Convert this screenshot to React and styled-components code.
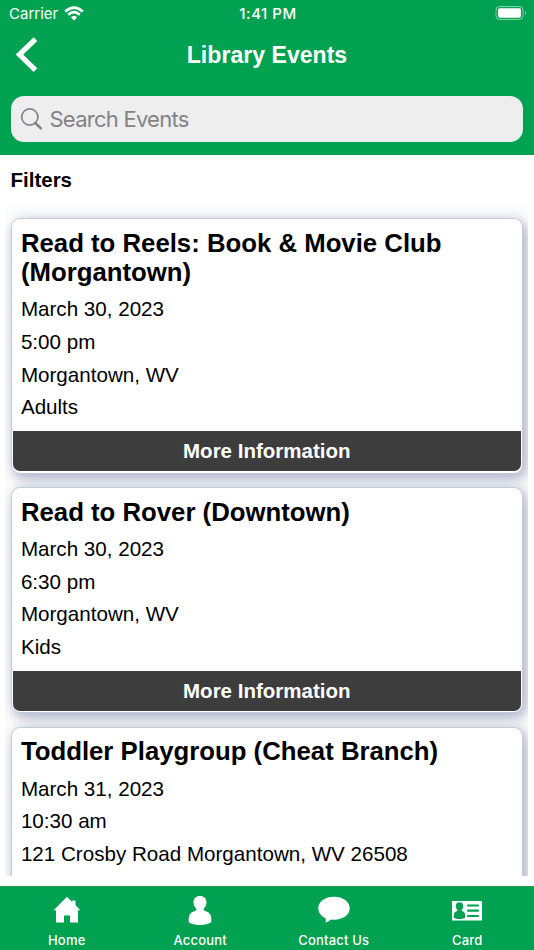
import React from "react";
import styled, { createGlobalStyle } from "styled-components";

const GREEN = "#00a150";

const GlobalStyle = createGlobalStyle`
  * { box-sizing: border-box; }
  body { margin: 0; background: #fff; color: #000; font-family: "Liberation Sans", Arial, sans-serif; }
  h1, h2, p { margin: 0; }
`;

const Screen = styled.div`
  width: 534px;
  height: 950px;
  display: flex;
  flex-direction: column;
  overflow: hidden;
`;

const Header = styled.header`
  height: 155px;
  flex: none;
  background: ${GREEN};
  color: #fff;
`;

const StatusBar = styled.div`
  height: 28px;
  display: grid;
  grid-template-columns: 1fr auto 1fr;
  align-items: center;
  padding: 0 7px 0 9px;
  font-family: Inter, sans-serif;
  font-size: 15px;
  line-height: 28px;
`;

const Carrier = styled.div`
  display: flex;
  align-items: center;
  gap: 6px;
  svg { margin-top: -2px; }
`;

const Clock = styled.div`
  font-weight: 500;
  font-size: 15px;
  letter-spacing: 0.5px;
`;

const Battery = styled.div`
  display: flex;
  justify-content: flex-end;
  svg { display: block; margin-top: -2px; }
`;

const TitleBar = styled.div`
  height: 68px;
  display: grid;
  grid-template-columns: 60px 1fr 60px;
  align-items: start;
`;

const BackButton = styled.button`
  height: 54px;
  padding: 0 0 0 15px;
  border: 0;
  background: none;
  color: #fff;
  svg { display: block; }
`;

const Title = styled.h1`
  text-align: center;
  font-size: 23.1px;
  line-height: 54px;
`;

const SearchBox = styled.div`
  height: 46px;
  margin: 0 11px 0 10.5px;
  padding-left: 9px;
  display: flex;
  align-items: center;
  gap: 7px;
  border-radius: 13px;
  background: #eeeeef;
  color: #838388;
  font-family: Inter, sans-serif;
  font-size: 22px;
`;

const SearchLabel = styled.span`
  letter-spacing: -0.75px;
  line-height: 46px;
`;

const Content = styled.main`
  height: 721px;
  flex: none;
  width: 523px;
  margin-left: 5px;
  padding: 0 5px 0 5.5px;
  overflow: hidden;
`;

const Filters = styled.h2`
  height: 63.4px;
  font-size: 20.5px;
  line-height: 50px;
`;

const EventList = styled.div`
  display: flex;
  flex-direction: column;
  gap: 13.4px;
`;

const EventCard = styled.article`
  flex: none;
  padding: 9px 1px 1.6px;
  border: 1px solid #c3cbd9;
  border-radius: 9px;
  background: #fff;
  box-shadow: 3px 4px 8px rgba(80, 80, 140, 0.2), 3px 3px 18px rgba(70, 90, 125, 0.36);
`;

const EventTitle = styled.h2`
  padding: 0.5px 8.4px 0;
  font-size: 25.75px;
  line-height: 29px;
`;

const Details = styled.div`
  padding: 6.6px 8.4px 7.2px;
  font-size: 20.6px;
  line-height: 32.6px;
`;

const MoreButton = styled.button`
  display: block;
  width: 100%;
  height: 40px;
  padding: 0;
  border: 0;
  border-radius: 0 0 7px 7px;
  background: #3c3d3c;
  color: #fff;
  font: bold 20.5px/40px "Liberation Sans", Arial, sans-serif;
`;

const TabBar = styled.nav`
  height: 64px;
  flex: none;
  margin-top: 10px;
  display: grid;
  grid-template-columns: repeat(4, 1fr);
  background: ${GREEN};
  box-shadow: inset 0 1px #239653;
`;

const Tab = styled.a`
  display: flex;
  flex-direction: column;
  align-items: center;
  padding-top: 8px;
  color: #fff;
  font: 500 13px/16px Inter, sans-serif;
  letter-spacing: 0.2px;
  svg { display: block; margin-bottom: 6px; }
`;

const WifiIcon = () => (
  <svg width="20" height="15" viewBox="0 0 20 15" fill="none" stroke="#fff" strokeWidth="2.7">
    <path d="M1.2 5.5Q10-2.3 18.8 5.5" />
    <path d="M4.2 8.7Q10 3.7 15.8 8.7" />
    <path d="M6.8 11.2Q10 8.1 13.2 11.2L10 14.5Z" fill="#fff" stroke="none" />
  </svg>
);

const BatteryIcon = () => (
  <svg width="32" height="16" viewBox="0 0 32 16" fill="none">
    <rect x="1" y="1.5" width="27" height="13" rx="3.5" stroke="#fff" strokeOpacity=".5" />
    <rect x="3" y="3.3" width="23" height="9.5" rx="1.7" fill="#fff" />
    <path d="M30 5.5q2 2.5 0 5Z" fill="#fff" fillOpacity=".5" />
  </svg>
);

const BackIcon = () => (
  <svg width="24" height="38" viewBox="0 0 24 38" fill="none" stroke="#fff" strokeWidth="5.2">
    <path d="M20.5 3.2L4.4 18.5L20.5 34.2" />
  </svg>
);

const SearchIcon = () => (
  <svg width="23" height="24" viewBox="0 0 23 24" fill="none" stroke="#838388">
    <circle cx="9.8" cy="10" r="8.1" strokeWidth="1.7" />
    <path d="M15.2 15.8L20.8 21.3" strokeWidth="2.5" strokeLinecap="round" />
  </svg>
);

const HomeIcon = () => (
  <svg width="32" height="32" viewBox="0 0 32 32" fill="#fff">
    <path d="M16 2.8L21.2 8V6.5H24.5V11.3L29.3 16.3H27V28.6H19V21.5H13V28.6H5V16.3H2.7Z" />
  </svg>
);

const AccountIcon = () => (
  <svg width="32" height="32" viewBox="0 0 32 32" fill="#fff">
    <path d="M16 2C12 2 9.4 4.5 9.5 8.5C9.6 11.3 11 13.5 12.6 15.1C12.7 16.3 11.6 16.7 10.2 17.2C6.5 18.3 4.7 20.8 4.7 25V28C8.5 32 23.5 32 27.3 28V25C27.3 20.8 25.5 18.3 21.8 17.2C20.4 16.7 19.3 16.3 19.4 15.1C21 13.5 22.4 11.3 22.5 8.5C22.6 4.5 20 2 16 2Z" />
  </svg>
);

const ChatIcon = () => (
  <svg width="32" height="32" viewBox="0 0 32 32" fill="#fff">
    <path d="M16 2.7C7 2.7.3 7.6.3 14.3C.3 18.5 3.1 22 7.2 24.1C8 25.1 8.1 26.4 7.2 28.4C10.2 28 11.7 26.6 13 25.5C23 26.9 31.7 22 31.7 14.3C31.7 7.6 25 2.7 16 2.7Z" />
  </svg>
);

const CardIcon = () => (
  <svg width="32" height="32" viewBox="0 0 32 32">
    <path fill="#fff" d="M1 7H31V26.5H1Z" />
    <path fill={GREEN} d="M8.5 8.2C6 8.2 4.8 9.8 4.8 12C4.8 13.5 5.3 14.8 6.3 15.7V17C4 17.5 2.8 19 2.8 21.2V23.8C5.5 25.5 11.5 25.5 14.2 23.8V21.2C14.2 19 13 17.5 10.7 17V15.7C11.7 14.8 12.2 13.5 12.2 12C12.2 9.8 11 8.2 8.5 8.2Z" />
    <path stroke={GREEN} strokeWidth="2.2" strokeLinecap="round" d="M17 11.5H27M17 16.7H27M17 22H27" />
  </svg>
);

const events = [
  { title: "Read to Reels: Book & Movie Club (Morgantown)", details: ["March 30, 2023", "5:00 pm", "Morgantown, WV", "Adults"] },
  { title: "Read to Rover (Downtown)", details: ["March 30, 2023", "6:30 pm", "Morgantown, WV", "Kids"] },
  { title: "Toddler Playgroup (Cheat Branch)", details: ["March 31, 2023", "10:30 am", "121 Crosby Road Morgantown, WV 26508"], continues: true },
];

const PartialDetails = styled(Details)`
  height: 160px;
`;

const tabs = [
  { label: "Home", Icon: HomeIcon },
  { label: "Account", Icon: AccountIcon },
  { label: "Contact Us", Icon: ChatIcon },
  { label: "Card", Icon: CardIcon },
];

export default function App() {
  return (
    <>
      <GlobalStyle />
      <Screen>
        <Header>
          <StatusBar>
            <Carrier>Carrier <WifiIcon /></Carrier>
            <Clock>1:41 PM</Clock>
            <Battery><BatteryIcon /></Battery>
          </StatusBar>
          <TitleBar>
            <BackButton aria-label="Back"><BackIcon /></BackButton>
            <Title>Library Events</Title>
          </TitleBar>
          <SearchBox><SearchIcon /><SearchLabel>Search Events</SearchLabel></SearchBox>
        </Header>
        <Content>
          <Filters>Filters</Filters>
          <EventList>
            {events.map((event) => {
              const Body = event.continues ? PartialDetails : Details;
              return (
                <EventCard key={event.title}>
                  <EventTitle>{event.title}</EventTitle>
                  <Body>{event.details.map((line) => <p key={line}>{line}</p>)}</Body>
                  {!event.continues && <MoreButton>More Information</MoreButton>}
                </EventCard>
              );
            })}
          </EventList>
        </Content>
        <TabBar>
          {tabs.map(({ label, Icon }) => <Tab key={label}><Icon />{label}</Tab>)}
        </TabBar>
      </Screen>
    </>
  );
}
